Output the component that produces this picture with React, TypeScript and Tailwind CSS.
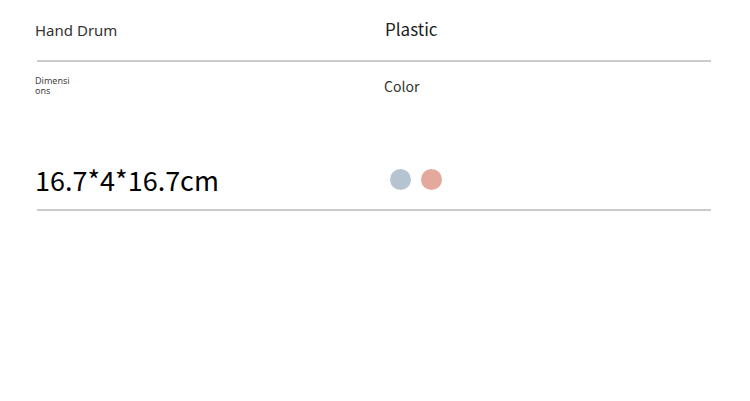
export default function App() {
  return (
    <div className="w-[750px] h-[401px] bg-white text-[#222] font-['Noto_Sans',sans-serif]">
      <div className="pt-[18px] pl-[35px] pr-[39px]">
        {/* Top row */}
        <div className="flex items-center h-[24px]">
          <div className="w-[350px] text-[15px] text-[#333] leading-none">Hand Drum</div>
          <div className="text-[17px] text-[#222] leading-none font-['Noto_Sans_CJK_SC',sans-serif] -mt-[3px]">Plastic</div>
        </div>
        <div className="mt-[18px] ml-[2px] h-[2px] bg-[#cbcbcb]" />

        {/* Labels */}
        <div className="flex mt-[14px]">
          <div className="w-[349px]">
            <div className="w-[38px] break-all text-[9px] leading-[10px] text-[#444]">Dimensions</div>
          </div>
          <div className="pt-[1px] text-[14px] leading-[18px] text-[#333] font-['Noto_Sans_CJK_SC',sans-serif]">Color</div>
        </div>

        {/* Values */}
        <div className="flex items-center mt-[68px] h-[30px]">
          <div className="w-[355px] text-[27px] leading-none text-black font-['Noto_Sans_CJK_SC',sans-serif]">16.7*4*16.7cm</div>
          <div className="flex gap-[10px]">
            <span className="w-[21px] h-[21px] rounded-full bg-[#b6c3d1]" />
            <span className="w-[21px] h-[21px] rounded-full bg-[#e4a89d]" />
          </div>
        </div>
        <div className="mt-[15px] ml-[2px] h-[2px] bg-[#cbcbcb]" />
      </div>
    </div>
  );
}
